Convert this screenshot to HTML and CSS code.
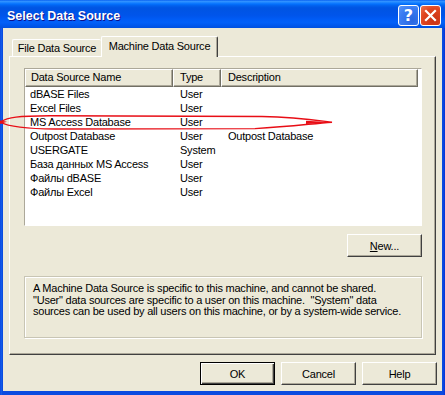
FILE: index.html
```html
<!DOCTYPE html>
<html>
<head>
<meta charset="utf-8">
<link rel="stylesheet" href="styles.css">
</head>
<body>
<div class="window">
  <div class="titlebar">
    <span class="title">Select Data Source</span>
    <div class="tb-buttons">
      <span class="tb-btn help">?</span>
      <span class="tb-btn close"><svg width="19" height="19" viewBox="0 0 19 19"><path d="M5 5 L14 14 M14 5 L5 14" stroke="#fff" stroke-width="2.2" stroke-linecap="square"/></svg></span>
    </div>
  </div>
  <div class="client">
    <div class="tabs">
      <div class="tab">File Data Source</div>
      <div class="tab active">Machine Data Source</div>
    </div>
    <div class="panel">
      <div class="list">
        <div class="list-head">
          <div class="hcell h1">Data Source Name</div>
          <div class="hcell h2">Type</div>
          <div class="hcell h3">Description</div>
        </div>
        <div class="row"><span class="c1">dBASE Files</span><span class="c2">User</span><span class="c3"></span></div>
        <div class="row"><span class="c1">Excel Files</span><span class="c2">User</span><span class="c3"></span></div>
        <div class="row"><span class="c1">MS Access Database</span><span class="c2">User</span><span class="c3"></span></div>
        <div class="row"><span class="c1">Outpost Database</span><span class="c2">User</span><span class="c3">Outpost Database</span></div>
        <div class="row"><span class="c1">USERGATE</span><span class="c2">System</span><span class="c3"></span></div>
        <div class="row"><span class="c1">База данных MS Access</span><span class="c2">User</span><span class="c3"></span></div>
        <div class="row"><span class="c1">Файлы dBASE</span><span class="c2">User</span><span class="c3"></span></div>
        <div class="row"><span class="c1">Файлы Excel</span><span class="c2">User</span><span class="c3"></span></div>
      </div>
      <div class="new-row"><button class="btn"><u>N</u>ew...</button></div>
      <div class="group">A Machine Data Source is specific to this machine, and cannot be shared.<br>"User" data sources are specific to a user on this machine.&nbsp; "System" data<br>sources can be used by all users on this machine, or by a system-wide service.</div>
    </div>
    <div class="buttons">
      <button class="btn default">OK</button>
      <button class="btn">Cancel</button>
      <button class="btn">Help</button>
    </div>
  </div>
  <svg class="mark" width="445" height="395" viewBox="0 0 445 395">
    <path d="M0 122 C8 117, 18 116, 50 115.8 L262 116.5 C298 117.2, 318 120.5, 332 122.2 C312 123.6, 292 126.5, 255 128.6 L55 129 C22 128.8, 8 126.5, 0 122 Z" fill="none" stroke="#E80E16" stroke-width="1.4"/>
    <path d="M306 120.8 L332 122.2 L306 124 Z" fill="#E80E16"/>
    <path d="M0 120.5 L7 121.8 L0 124 Z" fill="#E80E16"/>
  </svg>
</div>
</body>
</html>
```
FILE: styles.css
```css
body {
  margin: 0;
  font-family: "Liberation Sans", Arial, sans-serif;
  font-size: 11px;
  color: #000;
}

.window {
  position: relative;
  width: 445px;
  height: 395px;
  box-sizing: border-box;
  padding: 0 3px 4px;
  display: flex;
  flex-direction: column;
  background: linear-gradient(to right, #0831D9 0, #166AEE 1px, #0B4BE0 2px, #0B4BE0 calc(100% - 2px), #0831D9 100%);
}

.titlebar {
  height: 28px;
  margin: 0 -3px;
  padding: 0 4px 0 7px;
  box-sizing: border-box;
  display: flex;
  align-items: center;
  justify-content: space-between;
  background: linear-gradient(to bottom, #0058EE 0%, #3593FF 4%, #288EFF 7%, #127DFF 11%, #036FFC 15%, #0262EE 20%, #0057E5 26%, #0054E3 32%, #0055EB 56%, #005BF5 68%, #0260F8 80%, #0058EE 90%, #0050DE 100%);
}

.title {
  color: #fff;
  font-weight: bold;
  font-size: 12.5px;
  padding-top: 3px;
  text-shadow: 1px 1px #0F1089;
}

.tb-buttons {
  display: flex;
  gap: 1px;
  padding-top: 3px;
}

.tb-btn {
  width: 21px;
  height: 21px;
  box-sizing: border-box;
  border: 1px solid #fff;
  border-radius: 3px;
  display: flex;
  align-items: center;
  justify-content: center;
  color: #fff;
}

.help {
  background: radial-gradient(circle at 70% 75%, #2A67E0, #3A7CF2 60%, #5A96F8);
  font-weight: bold;
  font-size: 16px;
  font-family: "DejaVu Sans", sans-serif;
}

.close {
  background: radial-gradient(circle at 70% 75%, #C93315, #E0451F 60%, #EE7550);
}

.client {
  flex: 1;
  background: #ECE9D8;
  padding: 8px 0 0 6px;
  display: flex;
  flex-direction: column;
  letter-spacing: -0.22px;
}

.tabs {
  display: flex;
  align-items: flex-end;
  height: 21px;
  margin-left: 3px;
  margin-bottom: -1px;
  position: relative;
  z-index: 1;
}

.tab {
  box-sizing: border-box;
  border: 1px solid;
  border-color: #fff #404040 transparent #fff;
  border-bottom: none;
  border-radius: 2px 2px 0 0;
  box-shadow: inset -1px 0 #ACA899;
  background: #ECE9D8;
  text-align: center;
  white-space: nowrap;
}

.tab:first-child {
  width: 89px;
  height: 17px;
  line-height: 16px;
  margin-bottom: 1px;
  border-right: none;
  box-shadow: none;
}

.tab.active {
  width: 117px;
  height: 21px;
  line-height: 18px;
}

.panel {
  width: 427px;
  height: 299px;
  box-sizing: border-box;
  border: 1px solid;
  border-color: #fff #404040 #404040 #fff;
  box-shadow: inset -1px -1px #ACA899;
  padding: 11px 0 0 14px;
}

.list {
  width: 398px;
  height: 158px;
  box-sizing: border-box;
  background: #fff;
  border: 1px solid;
  border-color: #ACA899 #fff #fff #ACA899;
}

.list-head {
  display: grid;
  grid-template-columns: 148px 48px 197px;
  height: 18px;
}

.hcell {
  box-sizing: border-box;
  background: #ECE9D8;
  border: 1px solid;
  border-color: #fff #716F64 #716F64 #fff;
  box-shadow: inset -1px -1px #ACA899;
  line-height: 15px;
  white-space: nowrap;
}

.h1 { padding-left: 5px; }
.h2 { padding-left: 6px; }
.h3 { padding-left: 6px; }

.row {
  display: grid;
  grid-template-columns: 148px 48px 197px;
  height: 14px;
  line-height: 14px;
  white-space: nowrap;
}

.c1 { padding-left: 5px; }
.c2 { padding-left: 7px; }
.c3 { padding-left: 7px; }

.new-row {
  width: 398px;
  display: flex;
  justify-content: flex-end;
  margin-top: 8px;
}

.btn {
  width: 75px;
  height: 23px;
  box-sizing: border-box;
  padding: 0;
  border: 1px solid;
  border-color: #fff #404040 #404040 #fff;
  box-shadow: inset -1px -1px #ACA899;
  background: #ECE9D8;
  font-family: "Liberation Sans", Arial, sans-serif;
  font-size: 11px;
  letter-spacing: inherit;
  color: #000;
}

.btn.default {
  border-color: #000;
  box-shadow: inset 1px 1px #fff, inset -1px -1px #404040, inset -2px -2px #ACA899;
}

.group {
  width: 398px;
  height: 62px;
  box-sizing: border-box;
  margin-top: 19px;
  border: 1px solid #C8C5B4;
  box-shadow: inset 1px 1px #fff, 1px 1px #fff;
  padding: 6px 0 0 8px;
  line-height: 11.7px;
  white-space: nowrap;
}

.buttons {
  width: 428px;
  display: flex;
  justify-content: flex-end;
  gap: 6px;
  margin-top: 7px;
}

.mark {
  position: absolute;
  left: 0;
  top: 0;
  pointer-events: none;
}
```
